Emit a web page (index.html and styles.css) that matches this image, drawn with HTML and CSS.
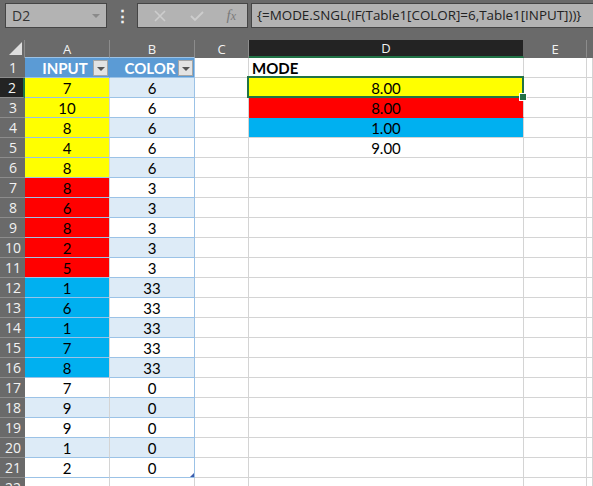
FILE: index.html
```html
<!DOCTYPE html>
<html>
<head>
<meta charset="utf-8">
<link rel="stylesheet" href="styles.css">
</head>
<body>
<div class="app">
  <div class="toolbar">
    <div class="namebox"><span class="nb-text">D2</span><span class="nb-arrow"></span></div>
    <div class="dots">⋮</div>
    <div class="btnbox">
      <svg class="ico" width="14" height="14" viewBox="0 0 14 14"><path d="M2 2 L12 12 M12 2 L2 12" stroke="#cdcdcd" stroke-width="1.6"/></svg>
      <svg class="ico" width="16" height="14" viewBox="0 0 16 14"><path d="M2 7 L6 11 L14 3" stroke="#cdcdcd" stroke-width="1.8" fill="none"/></svg>
      <span class="fx">f<span class="fx-x">x</span></span>
    </div>
    <div class="formula">{=MODE.SNGL(IF(Table1[COLOR]=6,Table1[INPUT]))}</div>
  </div>
  <div class="sheet">
    <div class="corner"><span class="tri"></span></div>
    <div class="ch tcol">A</div><div class="ch tcol">B</div><div class="ch">C</div><div class="ch chsel">D</div><div class="ch">E</div><div class="ch last"></div>

    <div class="rh">1</div><div class="c th">INPUT<span class="flt"></span></div><div class="c th thb">COLOR<span class="flt"></span></div><div class="c"></div><div class="c mode">MODE</div><div class="c"></div><div class="c"></div>
    <div class="rh rhsel">2</div><div class="c tb y">7</div><div class="c tb band tr">6</div><div class="c"></div><div class="c dy sel">8.00</div><div class="c"></div><div class="c"></div>
    <div class="rh">3</div><div class="c tb y">10</div><div class="c tb tr">6</div><div class="c"></div><div class="c dr">8.00</div><div class="c"></div><div class="c"></div>
    <div class="rh">4</div><div class="c tb y">8</div><div class="c tb band tr">6</div><div class="c"></div><div class="c db">1.00</div><div class="c"></div><div class="c"></div>
    <div class="rh">5</div><div class="c tb y">4</div><div class="c tb tr">6</div><div class="c"></div><div class="c">9.00</div><div class="c"></div><div class="c"></div>
    <div class="rh">6</div><div class="c tb y">8</div><div class="c tb band tr">6</div><div class="c"></div><div class="c"></div><div class="c"></div><div class="c"></div>
    <div class="rh">7</div><div class="c tb r">8</div><div class="c tb tr">3</div><div class="c"></div><div class="c"></div><div class="c"></div><div class="c"></div>
    <div class="rh">8</div><div class="c tb r">6</div><div class="c tb band tr">3</div><div class="c"></div><div class="c"></div><div class="c"></div><div class="c"></div>
    <div class="rh">9</div><div class="c tb r">8</div><div class="c tb tr">3</div><div class="c"></div><div class="c"></div><div class="c"></div><div class="c"></div>
    <div class="rh">10</div><div class="c tb r">2</div><div class="c tb band tr">3</div><div class="c"></div><div class="c"></div><div class="c"></div><div class="c"></div>
    <div class="rh">11</div><div class="c tb r">5</div><div class="c tb tr">3</div><div class="c"></div><div class="c"></div><div class="c"></div><div class="c"></div>
    <div class="rh">12</div><div class="c tb b">1</div><div class="c tb band tr">33</div><div class="c"></div><div class="c"></div><div class="c"></div><div class="c"></div>
    <div class="rh">13</div><div class="c tb b">6</div><div class="c tb tr">33</div><div class="c"></div><div class="c"></div><div class="c"></div><div class="c"></div>
    <div class="rh">14</div><div class="c tb b">1</div><div class="c tb band tr">33</div><div class="c"></div><div class="c"></div><div class="c"></div><div class="c"></div>
    <div class="rh">15</div><div class="c tb b">7</div><div class="c tb tr">33</div><div class="c"></div><div class="c"></div><div class="c"></div><div class="c"></div>
    <div class="rh">16</div><div class="c tb b">8</div><div class="c tb band tr">33</div><div class="c"></div><div class="c"></div><div class="c"></div><div class="c"></div>
    <div class="rh">17</div><div class="c tb">7</div><div class="c tb tr">0</div><div class="c"></div><div class="c"></div><div class="c"></div><div class="c"></div>
    <div class="rh">18</div><div class="c tb band">9</div><div class="c tb band tr">0</div><div class="c"></div><div class="c"></div><div class="c"></div><div class="c"></div>
    <div class="rh">19</div><div class="c tb">9</div><div class="c tb tr">0</div><div class="c"></div><div class="c"></div><div class="c"></div><div class="c"></div>
    <div class="rh">20</div><div class="c tb band">1</div><div class="c tb band tr">0</div><div class="c"></div><div class="c"></div><div class="c"></div><div class="c"></div>
    <div class="rh">21</div><div class="c tb">2</div><div class="c tb tr end">0</div><div class="c"></div><div class="c"></div><div class="c"></div><div class="c"></div>
    <div class="rh">22</div><div class="c"></div><div class="c"></div><div class="c"></div><div class="c"></div><div class="c"></div><div class="c"></div>
  </div>
</div>
</body>
</html>
```

FILE: styles.css
```css
* { box-sizing: border-box; }
html, body { margin: 0; padding: 0; }
body { width: 593px; height: 486px; overflow: hidden; background: #fff; }
.app { width: 593px; height: 486px; overflow: hidden; }

.toolbar {
  height: 40px;
  background: #6a6a6a;
  display: flex;
  align-items: flex-start;
  padding: 3px 0 0 5px;
  font-family: "Open Sans", "Noto Sans", sans-serif;
}
.namebox {
  width: 102px; height: 25px;
  background: #b3b3b3;
  border: 1px solid #454545;
  display: flex; align-items: center; justify-content: space-between;
  padding: 0 6px 0 6px;
}
.nb-text { font-size: 14px; color: #333; }
.nb-arrow {
  width: 0; height: 0;
  border-left: 4px solid transparent; border-right: 4px solid transparent;
  border-top: 4px solid #8a8a8a;
}
.dots {
  width: 30px; height: 25px; color: #f2f2f2; font-size: 17px; font-weight: bold;
  display: flex; align-items: center; justify-content: center;
}
.btnbox {
  width: 111px; height: 25px;
  background: #b3b3b3;
  border: 1px solid #454545;
  display: flex; align-items: center; justify-content: space-between;
  padding: 0 11px 0 15px;
}
.ico { display: block; }
.fx { font-family: "Liberation Serif", serif; font-style: italic; font-size: 15px; color: #7a7a7a; }
.fx-x { font-size: 12px; }
.formula {
  flex: 1; height: 25px; margin-left: 3px;
  background: #b3b3b3;
  border: 1px solid #454545; border-right: none;
  font-size: 13.4px; color: #222;
  padding: 0 0 0 5px; line-height: 23px; white-space: nowrap; overflow: hidden;
}

.sheet {
  display: grid;
  grid-template-columns: 25px 85px 85px 54px 275px 63px 6px;
  grid-template-rows: 18px repeat(22, 20px);
  font-family: "Lato", "Liberation Sans", sans-serif;
  font-size: 15px;
}
.corner { background: #6a6a6a; border-right: 1px solid #8a8a8a; position: relative; }
.tri {
  position: absolute; right: 2px; bottom: 3px; width: 0; height: 0;
  border-left: 13px solid transparent; border-bottom: 13px solid #dedede;
}
.ch {
  background: #6a6a6a; color: #f2f2f2;
  border-right: 1px solid #8c8c8c;
  font-family: "Open Sans", "Noto Sans", sans-serif; font-size: 13px;
  display: flex; align-items: center; justify-content: center;
  border-bottom: 1px solid #6a6a6a;
}
.ch.tcol { border-bottom-color: #9bc2e6; }
.ch.chsel { background: #232323; border-bottom: 2px solid #217346; border-right-color: #6a6a6a; }
.ch.last { border-right: none; }
.rh {
  background: #6a6a6a; color: #f2f2f2;
  border-bottom: 1px solid #8c8c8c;
  font-family: "Open Sans", "Noto Sans", sans-serif; font-size: 14px;
  display: flex; align-items: center; justify-content: center;
  padding-left: 1px;
}
.rh.rhsel { background: #232323; border-right: 2px solid #217346; }
.c {
  border-right: 1px solid #d4d4d4; border-bottom: 1px solid #d4d4d4;
  display: flex; align-items: center; justify-content: center;
  color: #000; padding-top: 1px;
}
.tb { border-bottom-color: #9bc2e6; }
.tr { border-right-color: #9bc2e6; }
.th {
  background: #5b9bd5; color: #fff; font-weight: bold;
  border-bottom-color: #9bc2e6; border-right-color: #5b9bd5;
  position: relative; padding-right: 4px;
}
.th.thb { border-right-color: #9bc2e6; }
.flt {
  position: absolute; right: 1px; top: 2px; width: 15px; height: 16px;
  background: #e3e3e3; border: 1px solid #a6a6a6;
}
.flt::after {
  content: ""; position: absolute; left: 3px; top: 6px; width: 0; height: 0;
  border-left: 4px solid transparent; border-right: 4px solid transparent;
  border-top: 4px solid #555;
}
.band { background: #ddebf7; }
.y { background: #ffff00; }
.r { background: #ff0000; }
.b { background: #00b0f0; }
.dy { background: #ffff00; border-bottom-color: #ffff00; }
.dr { background: #ff0000; border-bottom-color: #ff0000; }
.db { background: #00b0f0; }
.mode { justify-content: flex-start; padding-left: 3px; font-weight: bold; }
.sel { position: relative; }
.sel::before {
  content: ""; position: absolute; left: -2px; top: -2px; right: -1px; bottom: -1px;
  border: 2px solid #217346;
}
.sel::after {
  content: ""; position: absolute; right: -4px; bottom: -4px; width: 6px; height: 6px;
  background: #217346; border: 1px solid #fff;
}
.end { position: relative; }
.end::after {
  content: ""; position: absolute; right: 0; bottom: 0; width: 0; height: 0;
  border-left: 4px solid transparent; border-bottom: 4px solid #3d5dac;
}
```
